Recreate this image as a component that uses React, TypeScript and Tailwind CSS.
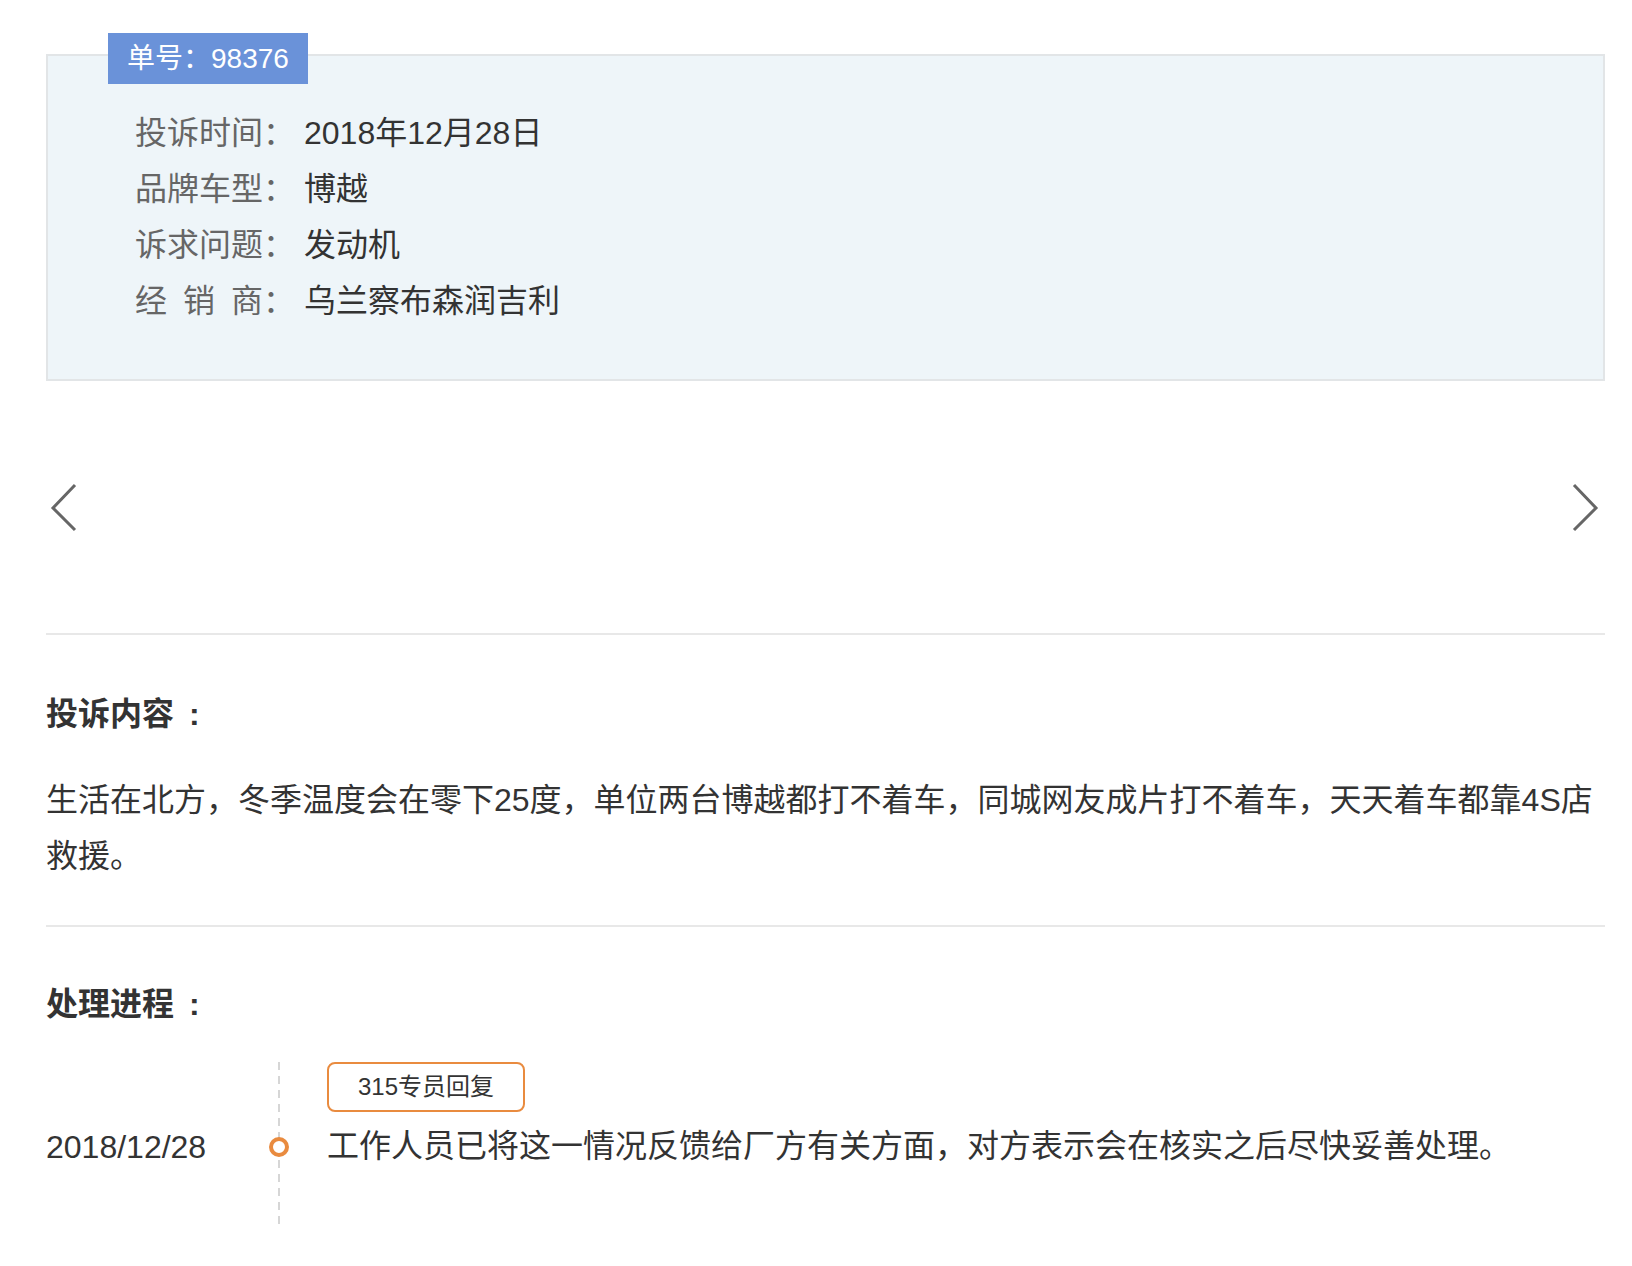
import React from "react";

const rows: { label: string; value: string }[] = [
  { label: "投诉时间", value: "2018年12月28日" },
  { label: "品牌车型", value: "博越" },
  { label: "诉求问题", value: "发动机" },
  { label: "经销商", value: "乌兰察布森润吉利" },
];

export default function App() {
  return (
    <div className="min-h-[1266px] w-full bg-white font-['Liberation_Sans','Noto_Sans_CJK_SC',sans-serif] text-[#333]">
      <div className="pl-[46px] pr-[27px] pt-[54px]">
        {/* Info box */}
        <div className="relative border-2 border-[#e2e5e7] bg-[#eef5f9] pl-[87px] pt-[49px] pb-[50px]">
          <div className="absolute left-[60px] top-[-23px] flex h-[51px] items-center bg-[#6a92d9] px-[19px] text-[28px] leading-none text-white">
            单号：98376
          </div>
          {rows.map((r) => (
            <div key={r.label} className="flex h-[56px] items-center text-[32px] leading-[56px]">
              <span className="inline-block w-[128px] text-[#666] [text-align-last:justify] [text-align:justify]">
                {r.label}
              </span>
              <span className="w-[32px] text-[#666]">：</span>
              <span className="ml-[9px] text-[#333]">{r.value}</span>
            </div>
          ))}
        </div>

        {/* Carousel arrows */}
        <div className="flex h-[252px] items-center justify-between">
          <svg width="28" height="50" viewBox="0 0 28 50" className="ml-[4px]">
            <polyline points="25,3 3,26 25,48" fill="none" stroke="#666" strokeWidth="3" />
          </svg>
          <svg width="28" height="50" viewBox="0 0 28 50" className="mr-[6px]">
            <polyline points="3,3 25,26 3,48" fill="none" stroke="#666" strokeWidth="3" />
          </svg>
        </div>

        <div className="h-[2px] bg-[#e8e8e8]" />

        {/* Complaint content */}
        <div className="pt-[51px] pb-[41px]">
          <h2 className="text-[32px] font-bold leading-[56px] text-[#333]">
            投诉内容<span className="ml-[15px]">:</span>
          </h2>
          <p className="mt-[30px] text-[32px] leading-[56px] text-[#333]">
            生活在北方，冬季温度会在零下25度，单位两台博越都打不着车，同城网友成片打不着车，天天着车都靠4S店救援。
          </p>
        </div>

        <div className="h-[2px] bg-[#e8e8e8]" />

        {/* Process */}
        <div className="pt-[49px]">
          <h2 className="text-[32px] font-bold leading-[56px] text-[#333]">
            处理进程<span className="ml-[15px]">:</span>
          </h2>
          <div className="mt-[30px] flex">
            <div className="w-[220px] pt-[57px] text-[32px] leading-[56px] text-[#333]">2018/12/28</div>
            <div className="relative w-[26px]">
              <div className="absolute left-[12px] top-0 bottom-0 w-[2px] bg-[repeating-linear-gradient(to_bottom,#d6d6d6_0px,#d6d6d6_8px,transparent_8px,transparent_14px)]" />
              <div className="absolute left-[3px] top-[75px] h-[20px] w-[20px] rounded-full border-[4px] border-[#e98b3f] bg-white" />
            </div>
            <div className="ml-[35px] pb-[55px]">
              <div className="inline-flex h-[50px] items-center rounded-[8px] border-2 border-[#e98b3f] px-[29px] text-[24px] leading-none text-[#333]">
                315专员回复
              </div>
              <div className="mt-[6px] text-[32px] leading-[56px] text-[#333]">
                工作人员已将这一情况反馈给厂方有关方面，对方表示会在核实之后尽快妥善处理。
              </div>
            </div>
          </div>
        </div>
      </div>
    </div>
  );
}
